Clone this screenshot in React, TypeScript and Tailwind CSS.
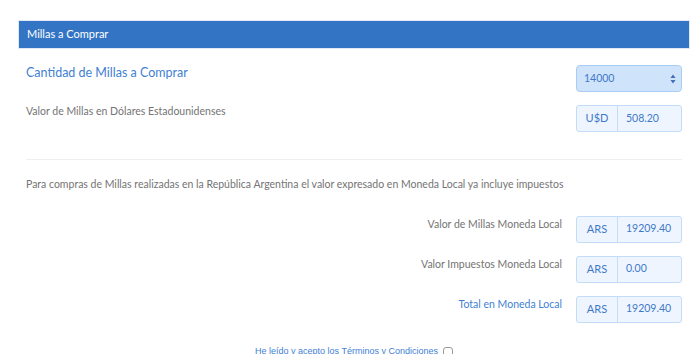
import React from 'react';

const font = { fontFamily: 'Lato, "Noto Sans", sans-serif' };

const Addon = ({ unit, value }: { unit: string; value: string }) => (
  <div className="flex w-[106px] h-[27px] border border-[#c3dcf8] rounded-[3px] bg-[#eef5fe] text-[#3f79c9]">
    <div className="w-[41px] flex items-center justify-center border-r border-[#c3dcf8] text-[11px]">{unit}</div>
    <div className="flex-1 flex items-center pl-[8px] text-[10.5px]">{value}</div>
  </div>
);

const LocalRow = ({ label, value, blue }: { label: string; value: string; blue?: boolean }) => (
  <div className="flex justify-end items-start h-[27px]">
    <div className={`pt-[1px] mr-[14px] text-[10.5px] ${blue ? 'text-[#3f7fd4]' : 'text-[#747474]'}`}>{label}</div>
    <Addon unit="ARS" value={value} />
  </div>
);

const App = () => {
  return (
    <div className="w-[700px] h-[354px] overflow-hidden bg-white" style={font}>
      <div className="pt-[20px] pl-[18px] pr-[10px]">
        <div className="h-[29px] bg-[#3375c4] border border-[#dfe8f4] flex items-center px-[8px] text-white text-[11px]">
          Millas a Comprar
        </div>

        <div className="px-[8px]">
          <div className="flex justify-between items-center mt-[16px] h-[27px]">
            <div className="text-[12.5px] text-[#3f7fd4] -mt-[11px]">Cantidad de Millas a Comprar</div>
            <div className="w-[106px] h-[27px] rounded-[4px] bg-[#cfe3fb] border border-[#a9ccf4] flex items-center justify-between pl-[7px] pr-[5px] text-[10.5px] text-[#3f79c9]">
              <span>14000</span>
              <svg width="6" height="10" viewBox="0 0 6 10">
                <path d="M3 0.5 L5.5 4 L0.5 4 Z M3 9.5 L5.5 6 L0.5 6 Z" fill="#3f6fb4" />
              </svg>
            </div>
          </div>

          <div className="flex justify-between items-start mt-[13px] h-[27px]">
            <div className="text-[10.5px] text-[#747474] -mt-[1px]">Valor de Millas en Dólares Estadounidenses</div>
            <Addon unit="U$D" value="508.20" />
          </div>

          <div className="h-px bg-[#eeeeee] mt-[27px]" />

          <div className="mt-[17px] text-[10.5px] text-[#747474]">
            Para compras de Millas realizadas en la República Argentina el valor expresado en Moneda Local ya incluye impuestos
          </div>

          <div className="flex flex-col gap-[13px] mt-[23px]">
            <LocalRow label="Valor de Millas Moneda Local" value="19209.40" />
            <LocalRow label="Valor Impuestos Moneda Local" value="0.00" />
            <LocalRow label="Total en Moneda Local" value="19209.40" blue />
          </div>

          <div
            className="flex justify-center items-center mt-[22px] text-[9px] text-[#3f7fd4]"
            style={{ fontFamily: '"Liberation Sans", Arial, sans-serif' }}
          >
            <span>He leído y acepto los Términos y Condiciones</span>
            <span className="ml-[5px] w-[10px] h-[10px] border border-[#9a9a9a] rounded-[3px] bg-white" />
          </div>
        </div>
      </div>
    </div>
  );
};

export default App;
